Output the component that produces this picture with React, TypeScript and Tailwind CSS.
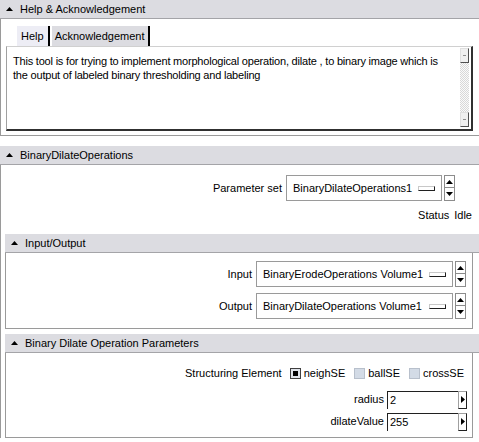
import React from "react";

const helpText =
  "This tool is for trying to implement morphological operation, dilate , to binary image which is the output of labeled binary thresholding and labeling";

const Caret = () => (
  <svg width="7" height="4" viewBox="0 0 7 4" className="shrink-0">
    <path d="M3.5 0 L7 4 L0 4 Z" fill="#000" />
  </svg>
);

const SectionHeader = ({ title }: { title: string }) => (
  <div className="flex h-[19px] items-center border-b border-[#a4a4a8] bg-[#dcdce1] pl-[6px]">
    <Caret />
    <span className="ml-[7px] text-[11px] leading-none text-black">{title}</span>
  </div>
);

const Spinner = () => (
  <div className="flex h-[26px] w-[11px] flex-col">
    <div className="flex h-[13px] items-center justify-center border border-[#8c8c8c] bg-white">
      <svg width="7" height="4" viewBox="0 0 7 4">
        <path d="M3.5 0 L7 4 L0 4 Z" fill="#000" />
      </svg>
    </div>
    <div className="flex h-[13px] items-center justify-center border border-t-0 border-[#8c8c8c] bg-white">
      <svg width="7" height="4" viewBox="0 0 7 4">
        <path d="M0 0 L7 0 L3.5 4 Z" fill="#000" />
      </svg>
    </div>
  </div>
);

const Combo = ({ value, width }: { value: string; width: string }) => (
  <div className="flex items-center gap-[2px]">
    <div
      className={`flex h-[26px] ${width} items-center justify-between border border-[#9a9a9a] bg-white pl-[6px] pr-[6px]`}
    >
      <span className="text-[11px] text-black">{value}</span>
      <span className="h-[5px] w-[17px] shrink-0 border border-l-[#c8c8c8] border-t-[#c8c8c8] border-r-[#202020] border-b-[#202020] bg-white" />
    </div>
    <Spinner />
  </div>
);

const Check = ({ label, on }: { label: string; on?: boolean }) => (
  <label className="flex items-center gap-[3px] text-[11px] text-black">
    {on ? (
      <span className="flex h-[11px] w-[11px] items-center justify-center border border-[#404040] bg-[#dfe3ea]">
        <span className="h-[5px] w-[5px] bg-black" />
      </span>
    ) : (
      <span className="h-[11px] w-[11px] border border-[#b8c0cc] bg-[#d3dbe6]" />
    )}
    {label}
  </label>
);

const NumberField = ({ label, value }: { label: string; value: string }) => (
  <div className="flex items-center justify-end">
    <span className="mr-[3px] text-[11px] text-black">{label}</span>
    <div className="flex h-[18px] w-[71px] items-center border-l border-t border-[#202020] border-b-[#a0a0a0] border-r-0 bg-white pl-[2px]">
      <span className="text-[11px] text-black">{value}</span>
    </div>
    <div className="flex h-[18px] w-[9px] items-center justify-center border border-l-[#a0a0a0] border-t-[#a0a0a0] border-r-[#202020] border-b-[#202020] bg-white">
      <svg width="4" height="7" viewBox="0 0 4 7">
        <path d="M0 0 L4 3.5 L0 7 Z" fill="#000" />
      </svg>
    </div>
  </div>
);

export default function App() {
  return (
    <div className="h-[442px] w-[479px] overflow-hidden bg-white font-['Liberation_Sans',Arial,sans-serif]">
      {/* Help & Acknowledgement */}
      <SectionHeader title="Help & Acknowledgement" />
      <div className="h-[117px] border-b border-l border-[#9a9a9a] pt-[7px]">
        <div className="flex h-[20px] pl-[16px]">
          <div className="flex items-center border-r-2 border-black bg-[#ededf5] px-[4px] text-[11px] text-black">
            Help
          </div>
          <div className="ml-[2px] flex items-center border-r-2 border-black bg-[#dcdce1] px-[3px] text-[11px] text-black">
            Acknowledgement
          </div>
        </div>
        <div className="ml-[5px] flex h-[85px] w-[467px] border border-b-2 border-r-2 border-l-[#a0a0a0] border-t-[#d0d0d0] border-r-[#303030] border-b-[#303030] bg-white">
          <p className="flex-1 pl-[6px] pr-[22px] pt-[7px] text-[11px] leading-[14px] tracking-[-0.2px] text-black">
            {helpText}
          </p>
          <div className="mr-[2px] mt-[1px] flex w-[9px] flex-col">
            <div className="flex h-[15px] items-center justify-center border border-l-[#e0e0e0] border-t-[#e0e0e0] border-r-[#505050] border-b-[#505050] bg-[#f0f0f0]">
              <span className="h-[1px] w-[3px] bg-[#909090]" />
            </div>
            <div className="flex-1 bg-[repeating-conic-gradient(#d8d8d8_0_25%,#fafafa_0_50%)] bg-[length:2px_2px]" />
            <div className="mb-[2px] flex h-[15px] items-center justify-center border border-l-[#e0e0e0] border-t-[#e0e0e0] border-r-[#505050] border-b-[#505050] bg-[#f0f0f0]">
              <span className="h-[1px] w-[3px] bg-[#909090]" />
            </div>
          </div>
        </div>
      </div>

      <div className="h-[10px]" />

      {/* BinaryDilateOperations */}
      <SectionHeader title="BinaryDilateOperations" />
      <div className="border-l border-[#9a9a9a]">
        <div className="flex items-center justify-end pr-[24px] pt-[10px]">
          <span className="mr-[4px] text-[11px] text-black">Parameter set</span>
          <Combo value="BinaryDilateOperations1" width="w-[156px]" />
        </div>
        <div className="flex justify-end gap-[5px] pr-[7px] pt-[8px] text-[11px] leading-[13px] text-black">
          <span>Status</span>
          <span>Idle</span>
        </div>

        {/* Input/Output */}
        <div className="ml-[4px] mt-[12px]">
          <SectionHeader title="Input/Output" />
          <div className="mr-[6px] flex flex-col gap-[6px] border-b border-l border-r border-[#9a9a9a] pb-[9px] pt-[8px] pr-[6px]">
            <div className="flex items-center justify-end">
              <span className="mr-[4px] text-[11px] text-black">Input</span>
              <Combo value="BinaryErodeOperations Volume1" width="w-[197px]" />
            </div>
            <div className="flex items-center justify-end">
              <span className="mr-[4px] text-[11px] text-black">Output</span>
              <Combo value="BinaryDilateOperations Volume1" width="w-[197px]" />
            </div>
          </div>
        </div>

        {/* Binary Dilate Operation Parameters */}
        <div className="ml-[4px] mt-[5px]">
          <SectionHeader title="Binary Dilate Operation Parameters" />
          <div className="mr-[6px] h-[85px] border-b border-l border-r border-[#9a9a9a] pr-[5px] pt-[12px]">
            <div className="flex items-center justify-end gap-[9px] pr-[3px]">
              <span className="mr-[-1px] text-[11px] text-black">Structuring Element</span>
              <Check label="neighSE" on />
              <Check label="ballSE" />
              <Check label="crossSE" />
            </div>
            <div className="mt-[9px] flex flex-col gap-[4px]">
              <NumberField label="radius" value="2" />
              <NumberField label="dilateValue" value="255" />
            </div>
          </div>
        </div>
      </div>
    </div>
  );
}
